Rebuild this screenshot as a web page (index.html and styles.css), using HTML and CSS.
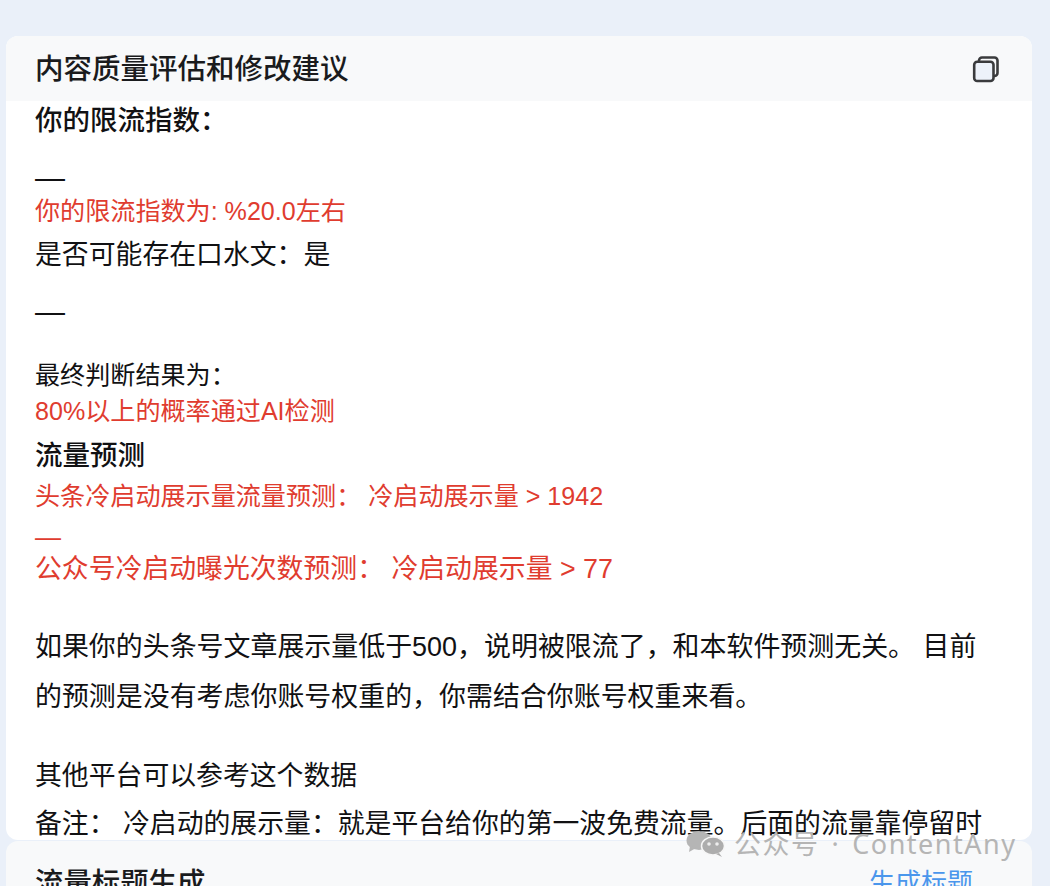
FILE: index.html
```html
<!DOCTYPE html>
<html lang="zh-CN">
<head>
<meta charset="utf-8">
<title>内容质量评估和修改建议</title>
<link rel="stylesheet" href="styles.css">
</head>
<body>
<main class="page">
  <section class="card card-main">
    <header class="card-head">
      <h2 class="title">内容质量评估和修改建议</h2>
      <svg class="copy" width="28" height="28" viewBox="0 0 28 28" aria-hidden="true">
        <path d="M7 6.5 V5.5 A3 3 0 0 1 10 2.5 H22.5 A3 3 0 0 1 25.5 5.5 V18 A3 3 0 0 1 22.5 21 H21.5" fill="none" stroke="#3a3b3d" stroke-width="2.6"/>
        <rect x="2.2" y="6.7" width="19.3" height="19.3" rx="3" fill="#edf2fa" stroke="#3a3b3d" stroke-width="2.6"/>
      </svg>
    </header>
    <div class="body">
      <p class="line h-bold r1">你的限流指数：</p>
      <p class="line dash r2">—</p>
      <p class="line red s25 r3">你的限流指数为: %20.0左右</p>
      <p class="line s265 r4">是否可能存在口水文：是</p>
      <p class="line dash r5">—</p>
      <p class="line s25 r6">最终判断结果为：</p>
      <p class="line red s25 r7">80%以上的概率通过AI检测</p>
      <p class="line h-bold r8">流量预测</p>
      <p class="line red s25 r9">头条冷启动展示量流量预测： 冷启动展示量 &gt; 1942</p>
      <p class="line red dash-sm r10">—</p>
      <p class="line red s265 r11">公众号冷启动曝光次数预测： 冷启动展示量 &gt; 77</p>
      <p class="para r12">如果你的头条号文章展示量低于500，说明被限流了，和本软件预测无关。 目前的预测是没有考虑你账号权重的，你需结合你账号权重来看。</p>
      <p class="line s265 r13">其他平台可以参考这个数据</p>
      <p class="line s265 r14">备注： 冷启动的展示量：就是平台给你的第一波免费流量。后面的流量靠停留时</p>
    </div>
  </section>
  <section class="card card-next">
    <header class="card-head next-head">
      <h2 class="title next-title">流量标题生成</h2>
      <span class="action">生成标题</span>
    </header>
  </section>
</main>
<div class="watermark">
  <svg width="42" height="26" viewBox="0 0 42 26" aria-hidden="true">
    <ellipse cx="13" cy="9.5" rx="12.5" ry="9.5" fill="#b5b5b5"/>
    <path d="M4 15 L3 21 L10 17 Z" fill="#b5b5b5"/>
    <ellipse cx="27" cy="15" rx="11.5" ry="9" fill="#adadad" stroke="#f6f6f6" stroke-width="1.5"/>
    <path d="M33 22 L36 26 L30 23 Z" fill="#adadad"/>
    <circle cx="23" cy="13" r="1.8" fill="#eee"/>
    <circle cx="31" cy="13" r="1.8" fill="#eee"/>
  </svg>
  <span>公众号 · ContentAny</span>
</div>
</body>
</html>
```

FILE: styles.css
```css
* { box-sizing: border-box; }
html, body { margin: 0; padding: 0; height: 886px; overflow: hidden; }
body {
  background: #eaf0f9;
  font-family: "Liberation Sans", "Noto Sans CJK SC", sans-serif;
  color: #111113;
  position: relative;
}
.page { padding: 36px 18px 0 6px; display: flex; flex-direction: column; gap: 1px; }
.card { background: #fff; border-radius: 12px; overflow: hidden; }
.card-main { height: 804px; }
.card-next { height: 60px; background: #f8f9fa; }
.card-head {
  height: 65px;
  background: #f8f9fa;
  display: flex;
  align-items: center;
  justify-content: space-between;
  padding: 0 30px 0 29px;
}
.next-head { height: 60px; align-items: flex-end; }
.title { margin: 0; font-size: 28.5px; font-weight: 500; line-height: 64px; color: #1a1b1d; }
.next-title { font-size: 28.4px; line-height: 40px; margin-bottom: -2px; }
.action { font-size: 26px; color: #4a96ec; line-height: 40px; margin-bottom: -2px; margin-right: 29px; }
.copy { display: block; margin-right: 2px; }
.body { padding: 0 30px 0 29px; }
.line { margin: 0; white-space: nowrap; line-height: 40px; height: 40px; }
.h-bold { font-size: 27.5px; font-weight: 500; color: #111113; }
.red { color: #e03c2f; }
.s25 { font-size: 25.1px; }
.s265 { font-size: 26.85px; }
.dash { font-size: 30px; }
.dash-sm { font-size: 26px; }
.para { margin: 0; font-size: 26.95px; line-height: 50px; }
.r1 { margin-top: 0; }
.r2 { margin-top: 17px; }
.r3 { margin-top: -7px; }
.r4 { margin-top: 4px; }
.r5 { margin-top: 17px; }
.r6 { margin-top: 23px; }
.r7 { margin-top: -4px; }
.r8 { margin-top: 5px; }
.r9 { margin-top: 0; }
.r10 { margin-top: 1px; }
.r11 { margin-top: -8px; }
.r12 { margin-top: 33px; }
.r13 { margin-top: 34px; }
.r14 { margin-top: 8px; }
.watermark {
  position: absolute;
  left: 686px;
  top: 829px;
  display: flex;
  align-items: center;
  gap: 6px;
  color: #b5b5b5;
  font-family: "Noto Sans", "Noto Sans CJK SC", sans-serif;
  font-size: 27px;
  line-height: 30px;
  letter-spacing: 1.5px;
  word-spacing: 3.5px;
}
```
